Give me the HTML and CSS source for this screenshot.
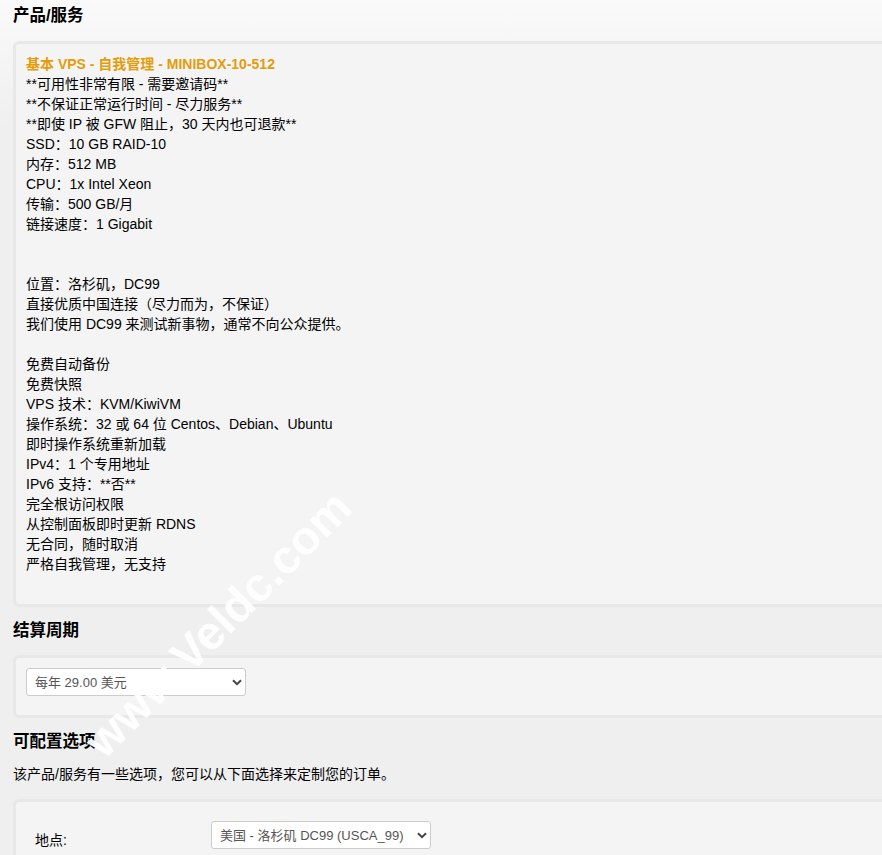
FILE: index.html
```html
<!DOCTYPE html>
<html lang="zh-CN">
<head>
    <meta charset="UTF-8">
    <meta name="viewport" content="width=device-width, initial-scale=1.0">
    <title>产品/服务</title>
    <link rel="stylesheet" href="styles.css">
</head>
<body>
    <div class="page">
        <h2>产品/服务</h2>
        <div class="panel product">
            <strong class="product-name">基本 VPS - 自我管理 - MINIBOX-10-512</strong><br>
            **可用性非常有限 - 需要邀请码**<br>
            **不保证正常运行时间 - 尽力服务**<br>
            **即使 IP 被 GFW 阻止，30 天内也可退款**<br>
            SSD：10 GB RAID-10<br>
            内存：512 MB<br>
            CPU：1x Intel Xeon<br>
            传输：500 GB/月<br>
            链接速度：1 Gigabit<br>
            <br>
            <br>
            位置：洛杉矶，DC99<br>
            直接优质中国连接（尽力而为，不保证）<br>
            我们使用 DC99 来测试新事物，通常不向公众提供。<br>
            <br>
            免费自动备份<br>
            免费快照<br>
            VPS 技术：KVM/KiwiVM<br>
            操作系统：32 或 64 位 Centos、Debian、Ubuntu<br>
            即时操作系统重新加载<br>
            IPv4：1 个专用地址<br>
            IPv6 支持：**否**<br>
            完全根访问权限<br>
            从控制面板即时更新 RDNS<br>
            无合同，随时取消<br>
            严格自我管理，无支持
        </div>

        <h2>结算周期</h2>
        <div class="panel billing">
            <div class="select-box">
                <select>
                    <option>每年 29.00 美元</option>
                </select>
                <svg class="chevron" width="10" height="7" viewBox="0 0 10 7"><path d="M1 1.2 L5 5.2 L9 1.2" fill="none" stroke="#444" stroke-width="2"/></svg>
            </div>
        </div>

        <h2>可配置选项</h2>
        <p class="intro">该产品/服务有一些选项，您可以从下面选择来定制您的订单。</p>
        <div class="panel options">
            <div class="option-row">
                <label>地点:</label>
                <div class="select-box">
                    <select>
                        <option>美国 - 洛杉矶 DC99 (USCA_99)</option>
                    </select>
                    <svg class="chevron" width="10" height="7" viewBox="0 0 10 7"><path d="M1 1.2 L5 5.2 L9 1.2" fill="none" stroke="#444" stroke-width="2"/></svg>
                </div>
            </div>
        </div>

        <!-- watermark -->
        <div class="watermark">www.Veldc.com</div>
    </div>
</body>
</html>
```

FILE: styles.css
```css
/* Page */
html, body {
    margin: 0;
    height: 100%;
}

body {
    background-color: #efefef;
    background-image: linear-gradient(#fafafa 0, #efefef 130px);
    background-repeat: no-repeat;
    color: #000;
    font-family: "Liberation Sans", "Noto Sans CJK SC", sans-serif;
    font-size: 14px;
    line-height: 20px;
}

.page {
    position: relative;
    padding: 4px 0 40px 13px;
    overflow: hidden;
}

h2 {
    margin: 0;
    font-size: 16.5px;
    line-height: 22px;
    font-weight: bold;
}

/* Panels run past the right edge */
.panel {
    background-color: #f4f4f4;
    border: 3px solid #e8e8e8;
    border-radius: 6px;
    margin-right: -20px;
}

.product {
    margin-top: 15px;
    padding: 10px 10px 30px 10px;
}

.product-name {
    color: #e59c0b;
}

h2 + .billing {
    margin-top: 14px;
}

.panel + h2 {
    margin-top: 12px;
}

.billing {
    padding: 10px 10px 19px 10px;
}

.intro {
    margin: 12px 0 15px 0;
}

.options {
    padding: 19px 19px 30px 19px;
}

.option-row {
    display: flex;
    align-items: flex-end;
}

.option-row label {
    width: 176px;
    line-height: 20px;
    margin-bottom: -1px;
}

/* Select boxes */
.select-box {
    position: relative;
    width: 220px;
}

.select-box select {
    -webkit-appearance: none;
    appearance: none;
    width: 220px;
    height: 28px;
    padding: 0 24px 0 8px;
    border: 1px solid #cccccc;
    border-radius: 3px;
    background-color: #fff;
    color: #555;
    font-family: "Liberation Sans", "Noto Sans CJK SC", sans-serif;
    font-size: 13px;
    display: block;
}

.chevron {
    position: absolute;
    right: 4px;
    top: 11px;
    pointer-events: none;
}

/* Watermark over the content */
.watermark {
    position: absolute;
    left: 40px;
    top: 597px;
    width: 356px;
    text-align: center;
    color: rgba(255, 255, 255, 0.95);
    font-family: "Liberation Sans", sans-serif;
    font-weight: bold;
    font-size: 47px;
    line-height: 54px;
    white-space: nowrap;
    transform: rotate(-45deg);
    pointer-events: none;
}
```
